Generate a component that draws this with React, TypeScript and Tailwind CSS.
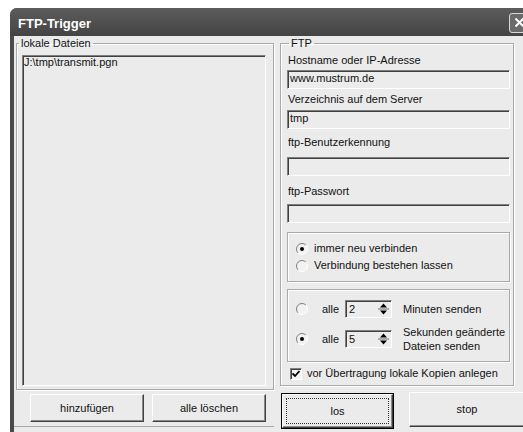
import React from 'react';

// classic sunken / raised bevels used by the dialog controls
const sunken =
  'border border-t-[#7f7f7f] border-l-[#7f7f7f] border-b-white border-r-white shadow-[inset_1px_1px_0_#404040]';
const raised =
  'border border-t-white border-l-white border-b-[#404040] border-r-[#404040] shadow-[inset_-1px_-1px_0_#8a8a8a]';
const etched = 'border border-[#a9a9a9] shadow-[inset_1px_1px_0_#fff,1px_1px_0_#fff]';

const Radio: React.FC<{ checked?: boolean }> = ({ checked }) => (
  <svg width="12" height="12" viewBox="0 0 12 12" className="shrink-0">
    <circle cx="6" cy="6" r="5.5" fill="#f2f2f2" />
    <path d="M2.1 9.9 A5.5 5.5 0 0 1 9.9 2.1" fill="none" stroke="#808080" strokeWidth="1" />
    <path d="M9.9 2.1 A5.5 5.5 0 0 1 2.1 9.9" fill="none" stroke="#ffffff" strokeWidth="1" />
    {checked && <circle cx="6" cy="6" r="2" fill="#000" />}
  </svg>
);

const Spin: React.FC<{ value: string }> = ({ value }) => (
  <div className={`${sunken} w-[47px] h-[18px] bg-[#ececec] flex items-center justify-between pl-[3px] pr-[1px]`}>
    <span className="leading-[14px]">{value}</span>
    <svg width="13" height="14" viewBox="0 0 13 14">
      <path d="M6.5 1.5 L10 5.5 L3 5.5 Z" fill="#000" />
      <line x1="1" y1="7" x2="12" y2="7" stroke="#6a6a6a" />
      <path d="M3 8.5 L10 8.5 L6.5 12.5 Z" fill="#000" />
    </svg>
  </div>
);

const Field: React.FC<{ value?: string; className?: string }> = ({ value, className }) => (
  <div className={`${sunken} h-[19px] bg-[#ececec] pl-[2px] leading-[15px] ${className ?? ''}`}>{value}</div>
);

export default function App() {
  return (
    <div className="w-[523px] h-[432px] overflow-hidden bg-white pt-[8px] pl-[10px] font-['Liberation_Sans',Arial,sans-serif] text-[11px] text-[#111]">
      <div className="w-[513px] h-[424px] flex flex-col rounded-tl-[7px] overflow-hidden bg-[#4b4b4b]">
        {/* title bar */}
        <div className="h-[28px] shrink-0 flex items-center justify-between bg-gradient-to-b from-[#5c5c5c] to-[#444444] pl-[8px] pt-[3px]">
          <span className="text-white font-bold text-[13px] leading-none">FTP-Trigger</span>
          <div className="w-[21px] h-[20px] -mr-[7px] -mt-[2px] rounded-[3px] border border-[#d8d8d8] bg-[#6b6b6b] flex items-center justify-center">
            <svg width="11" height="11" viewBox="0 0 11 11">
              <path d="M1.5 1.5 L9.5 9.5 M9.5 1.5 L1.5 9.5" stroke="#fff" strokeWidth="2" />
            </svg>
          </div>
        </div>

        <div className="flex-1 ml-[4px] bg-[#ebebeb] flex pt-[1px]">
          {/* local files */}
          <div className="w-[262px] flex flex-col">
            <fieldset className={`${etched} ml-[2px] w-[258px] h-[353px] pl-[5px] pr-[7px]`}>
              <legend className="ml-[-3px] px-[2px] leading-[13px]">lokale Dateien</legend>
              <div className={`${sunken} mt-[5px] h-[331px] bg-[#ebebeb] pl-[1px] leading-[12px]`}>
                {'J:\\tmp\\transmit.pgn'}
              </div>
            </fieldset>
            <div className="flex gap-[8px] pl-[16px] mt-[4px]">
              <button className={`${raised} w-[114px] h-[28px] bg-[#ebebeb]`}>hinzufügen</button>
              <button className={`${raised} w-[114px] h-[28px] bg-[#ebebeb]`}>alle löschen</button>
            </div>
            <div className="mt-[4px] h-px bg-[#a8a8a8]" />
          </div>

          {/* ftp settings */}
          <div className="flex-1 flex flex-col">
            <fieldset className={`${etched} ml-[6px] w-[234px] h-[349px] pl-[6px] pr-[3px]`}>
              <legend className="ml-[2px] px-[2px] leading-[13px]">FTP</legend>
              <div className="mt-[4px] pl-[1px] leading-[13px]">Hostname oder IP-Adresse</div>
              <Field value="www.mustrum.de" className="mt-[3px]" />
              <div className="mt-[4px] pl-[1px] leading-[13px]">Verzeichnis auf dem Server</div>
              <Field value="tmp" className="mt-[4px]" />
              <div className="mt-[7px] pl-[1px] leading-[13px]">ftp-Benutzerkennung</div>
              <Field className="mt-[8px]" />
              <div className="mt-[9px] pl-[1px] leading-[13px]">ftp-Passwort</div>
              <Field className="mt-[6px]" />

              <div className={`${etched} mt-[9px] h-[50px] pt-[7px] pl-[8px]`}>
                <div className="h-[17px] flex items-center gap-[6px]">
                  <Radio checked />
                  <span>immer neu verbinden</span>
                </div>
                <div className="h-[17px] flex items-center gap-[6px]">
                  <Radio />
                  <span>Verbindung bestehen lassen</span>
                </div>
              </div>

              <div className={`${etched} mt-[7px] h-[73px] pt-[10px] pl-[8px]`}>
                <div className="h-[18px] flex items-center">
                  <Radio />
                  <span className="ml-[14px] w-[23px]">alle</span>
                  <Spin value="2" />
                  <span className="ml-[11px]">Minuten senden</span>
                </div>
                <div className="mt-[7px] h-[28px] flex items-center">
                  <Radio checked />
                  <span className="ml-[14px] w-[23px]">alle</span>
                  <Spin value="5" />
                  <span className="ml-[11px] leading-[14px]">
                    Sekunden geänderte
                    <br />
                    Dateien senden
                  </span>
                </div>
              </div>

              <div className="mt-[5px] h-[13px] flex items-center pl-[3px] gap-[5px]">
                <div className={`${sunken} w-[12px] h-[12px] bg-[#f2f2f2] flex items-center justify-center`}>
                  <svg width="8" height="8" viewBox="0 0 8 8">
                    <path d="M0.5 3.5 L3 6 L7.5 1" fill="none" stroke="#000" strokeWidth="1.8" />
                  </svg>
                </div>
                <span className="leading-[13px]">vor Übertragung lokale Kopien anlegen</span>
              </div>
            </fieldset>

            <div className="flex mt-[7px] pl-[7px]">
              <button className="w-[113px] h-[36px] border border-black bg-[#ebebeb] p-0">
                <div className={`${raised} h-full p-[3px]`}>
                  <div className="h-full border border-dotted border-[#333] flex items-center justify-center">los</div>
                </div>
              </button>
              <button className={`${raised} ml-[15px] w-[116px] h-[35px] -mt-[1px] bg-[#ebebeb]`}>stop</button>
            </div>
          </div>
        </div>
      </div>
    </div>
  );
}
